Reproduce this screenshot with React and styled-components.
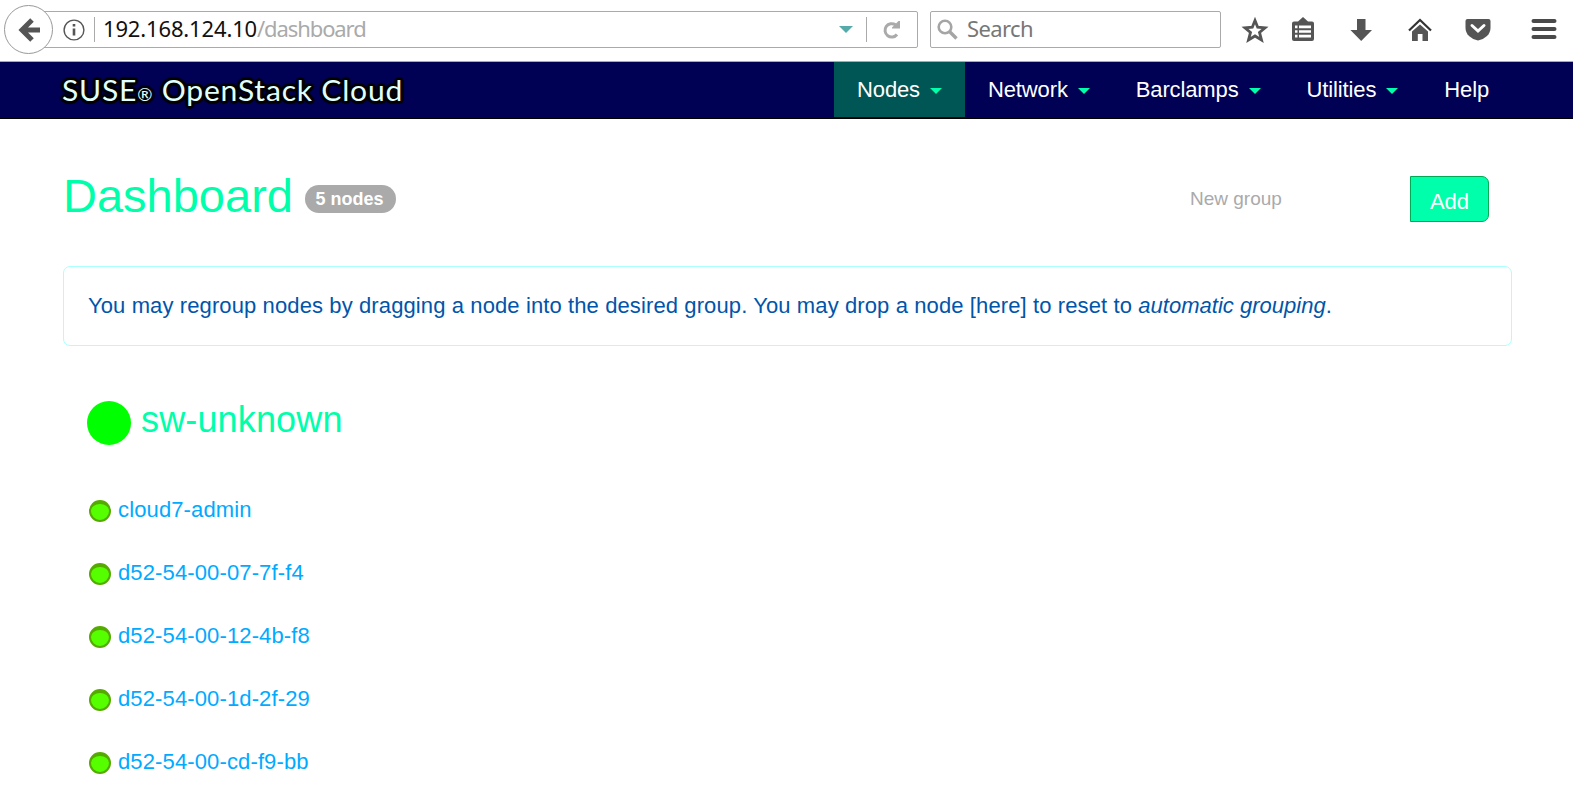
import React from 'react';
import styled, { createGlobalStyle } from 'styled-components';

const GlobalStyle = createGlobalStyle`
  *, *::before, *::after { box-sizing: border-box; }
  body {
    margin: 0;
    background: #fff;
    font-family: "Liberation Sans", Arial, sans-serif;
    font-size: 22px;
    overflow: hidden;
  }
`;

const Toolbar = styled.header`
  display: flex;
  align-items: center;
  height: 62px;
  padding: 0 0 2px 4px;
  border-bottom: 1px solid #aaaaa6;
  font-family: "Noto Sans", "Open Sans", sans-serif;
`;

const BackButton = styled.button`
  flex: none;
  z-index: 1;
  width: 49px;
  height: 49px;
  padding: 0;
  border: 1px solid #999;
  border-radius: 50%;
  background: #fff;
`;

const Field = styled.div`
  display: flex;
  align-items: center;
  flex: none;
  height: 37px;
  border: 1px solid #aaa;
  border-radius: 2px;
  white-space: pre;
`;

const AddressField = styled(Field)`
  width: 875px;
  margin-left: -10px;
  padding: 0 16px 0 19px;
`;

const SearchField = styled(Field)`
  width: 291px;
  margin-left: 12px;
  padding-left: 6px;
`;

const Separator = styled.span`
  width: 1px;
  height: 25px;
  margin: 0 ${(p) => p.$after}px 0 ${(p) => p.$before}px;
  background: #aaa;
`;

const Address = styled.span`
  flex: 1;
  margin-bottom: 3px;
  line-height: 30px;
  color: #111;
  letter-spacing: -0.15px;
`;

const AddressPath = styled.span`
  color: #aaa;
  letter-spacing: -1.1px;
`;

const SearchHint = styled.span`
  margin: 0 0 3px 9px;
  line-height: 30px;
  color: #777;
  letter-spacing: -0.6px;
`;

const Glyph = styled.svg`
  display: block;
  flex: none;
  overflow: visible;
`;

const ToolbarIcon = styled(Glyph)`
  margin-left: ${(p) => p.$gap}px;
`;

const Navbar = styled.nav`
  display: flex;
  justify-content: space-between;
  height: 57px;
  padding: 0 61px 0 62px;
  border-bottom: 1px solid #000;
  background: #000055;
  color: #fff;
`;

const Brand = styled.div`
  padding-top: 10px;
  font-family: Lato, sans-serif;
  font-size: 28px;
  line-height: 36px;
  letter-spacing: 0.75px;
  white-space: nowrap;
  color: #e0ffff;
  transform: scaleX(1.073);
  transform-origin: left;
  text-shadow: -2px -2px 1px #000, 2px -2px 1px #000, -2px 2px 1px #000,
    2px 2px 1px #000, 0 3px 1px #000, 0 -3px 1px #000, 3px 0 1px #000, -3px 0 1px #000;
`;

const Registered = styled.span`
  font-size: 17px;
`;

const Menu = styled.div`
  display: flex;
`;

const MenuItem = styled.a`
  display: flex;
  align-items: center;
  height: 55px;
  padding: 0 23px;
  letter-spacing: -0.13px;
  background: ${(p) => (p.$active ? '#005555' : 'transparent')};
`;

const Caret = styled.span`
  width: 12px;
  margin: 3px 0 0 10px;
  border: 6px solid transparent;
  border-top-color: #00ffaa;
  border-bottom: 0;
`;

const Page = styled.main`
  padding: 57px 61px 0 63px;
`;

const PageHeader = styled.div`
  display: flex;
  align-items: center;
  height: 46px;
  padding-right: 23px;
`;

const Title = styled.h1`
  align-self: flex-start;
  margin: 0;
  font-size: 47px;
  font-weight: 400;
  line-height: 40px;
  color: #00ffaa;
`;

const Badge = styled.span`
  display: flex;
  align-items: center;
  justify-content: center;
  width: 91px;
  height: 28px;
  margin-left: 12px;
  padding-right: 2px;
  border-radius: 14px;
  background: #aaa;
  color: #fff;
  font-size: 18px;
  font-weight: 700;
`;

const GroupInput = styled.div`
  width: 220px;
  margin-left: auto;
  font-size: 19px;
  color: #aaa;
`;

const AddButton = styled.button`
  width: 79px;
  height: 46px;
  padding: 6px 0 0;
  border: 1px solid #00aa55;
  border-radius: 0 7px 7px 0;
  background: #00ffaa;
  color: #fff;
  font: inherit;
`;

const Notice = styled.p`
  height: 80px;
  margin: 44px 0 0;
  padding: 0 24px;
  border: 1px solid #aaffff;
  border-radius: 7px;
  line-height: 78px;
  letter-spacing: 0.11px;
  white-space: nowrap;
  color: #0055aa;

  em {
    letter-spacing: 0.02px;
  }
`;

const Group = styled.section`
  padding: 55px 0 0 24px;
`;

const GroupHeader = styled.div`
  display: flex;
  align-items: center;
  height: 44px;
`;

const GroupStatus = styled.span`
  width: 44px;
  height: 44px;
  border-radius: 50%;
  background: #00ff00;
`;

const GroupName = styled.h2`
  margin: 0 0 6px 10px;
  font-size: 36px;
  font-weight: 400;
  line-height: 40px;
  letter-spacing: 0.15px;
  color: #00ffaa;
`;

const NodeList = styled.ul`
  margin: 34px 0 0;
  padding: 0;
  list-style: none;
`;

const NodeRow = styled.li`
  display: flex;
  align-items: center;
  height: 63px;
  padding-left: 2px;
`;

const NodeStatus = styled.span`
  width: 22px;
  height: 22px;
  border: 2px solid #55aa00;
  border-top-width: 4px;
  border-radius: 50%;
  background: #55ff00;
`;

const NodeLink = styled.a`
  margin: 0 0 2px 7px;
  letter-spacing: 0.13px;
  color: #00aaff;
`;

const MENU = [
  { label: 'Nodes', caret: true, active: true },
  { label: 'Network', caret: true },
  { label: 'Barclamps', caret: true },
  { label: 'Utilities', caret: true },
  { label: 'Help' },
];

const NODES = [
  'cloud7-admin',
  'd52-54-00-07-7f-f4',
  'd52-54-00-12-4b-f8',
  'd52-54-00-1d-2f-29',
  'd52-54-00-cd-f9-bb',
];

function BrowserBar() {
  return (
    <Toolbar>
      <BackButton aria-label="Back">
        <Glyph width="47" height="47" viewBox="0 0 47 47" fill="none" stroke="#555" strokeWidth="5">
          <path d="M35 24H18M27 14L17 24L27 34" />
        </Glyph>
      </BackButton>
      <AddressField>
        <Glyph width="22" height="22" viewBox="0 0 22 22" fill="none" stroke="#555">
          <circle cx="11" cy="11" r="9.9" strokeWidth="1.4" />
          <path d="M11 9.5V16.5M11 5V7.5" strokeWidth="2.6" />
        </Glyph>
        <Separator $before={9} $after={8} />
        <Address>
          192.168.124.10<AddressPath>/dashboard</AddressPath>
        </Address>
        <Glyph width="14" height="7" viewBox="0 0 14 7">
          <path d="M0 0H14L7 7Z" fill="#55aaaa" />
        </Glyph>
        <Separator $before={13} $after={16} />
        <Glyph width="18" height="18" viewBox="0 0 18 18">
          <path d="M14 13.5A6.7 6.7 0 1 1 12.5 3.8" fill="none" stroke="#aaa" strokeWidth="3" />
          <path d="M17 0V7.500H9V6.500L15.500 0Z" fill="#aaa" />
        </Glyph>
      </AddressField>
      <SearchField>
        <Glyph width="21" height="21" viewBox="0 0 21 21" fill="none" stroke="#a5a5a5">
          <circle cx="8" cy="8" r="6.3" strokeWidth="2.6" />
          <path d="M12.5 12.5L19.5 19.5" strokeWidth="3.4" />
        </Glyph>
        <SearchHint>Search</SearchHint>
      </SearchField>
      <ToolbarIcon $gap={21} width="26" height="26" viewBox="0 0 26 26">
        <path d="M13 3.500L15.700 10.200L23 10.800L17.500 15.400L19.500 23L13 19L6.500 23L8.500 15.400L3 10.800L10.300 10.200Z" fill="none" stroke="#555" strokeWidth="2.8" />
      </ToolbarIcon>
      <ToolbarIcon $gap={22} width="26" height="26" viewBox="0 0 26 26">
        <path d="M4 4.5H8L13 0L18 4.5H22Q24 4.5 24 6.5V22Q24 24 22 24H4Q2 24 2 22V6.5Q2 4.5 4 4.5Z" fill="#555" />
        <path d="M5 9.8H7.5M9 9.8H21M5 14.5H7.5M9 14.5H21M5 19.200H7.500M9 19.200H21" stroke="#fff" strokeWidth="2.7" />
      </ToolbarIcon>
      <ToolbarIcon $gap={32} width="26" height="26" viewBox="0 0 26 26">
        <path d="M9 2H17.5V13H24L13.2 24L2.4 13H9Z" fill="#555" />
      </ToolbarIcon>
      <ToolbarIcon $gap={33} width="26" height="26" viewBox="0 0 26 26">
        <path d="M2 13.500L13 3L24 13.500" fill="none" stroke="#333" strokeWidth="2.2" />
        <path d="M5 14.500L13 7.500L21 14.500V24H15.500V17H10.800V24H5Z" fill="#555" />
      </ToolbarIcon>
      <ToolbarIcon $gap={32} width="26" height="26" viewBox="0 0 26 26">
        <path d="M2.500 2H23.500Q25.500 2 25.500 4V11Q25.500 15.500 22 19T13 23.500Q7.500 22.500 4 19T0.500 11V4Q0.500 2 2.500 2Z" fill="#555" />
        <path d="M7 8.500L13 14L19 8.500" fill="none" stroke="#fff" strokeWidth="3" strokeLinecap="round" />
      </ToolbarIcon>
      <ToolbarIcon $gap={40} width="26" height="26" viewBox="0 0 26 26">
        <path d="M2.500 4H23.500M2.500 12H23.500M2.500 20H23.500" stroke="#4a4a4a" strokeWidth="4" strokeLinecap="round" />
      </ToolbarIcon>
    </Toolbar>
  );
}

export default function App() {
  return (
    <>
      <GlobalStyle />
      <BrowserBar />
      <Navbar>
        <Brand>
          SUSE<Registered>®</Registered> OpenStack Cloud
        </Brand>
        <Menu>
          {MENU.map((item) => (
            <MenuItem key={item.label} $active={item.active}>
              {item.label}
              {item.caret && <Caret />}
            </MenuItem>
          ))}
        </Menu>
      </Navbar>
      <Page>
        <PageHeader>
          <Title>Dashboard</Title>
          <Badge>5 nodes</Badge>
          <GroupInput>New group</GroupInput>
          <AddButton>Add</AddButton>
        </PageHeader>
        <Notice>
          You may regroup nodes by dragging a node into the desired group. You may drop a node [here] to reset to{' '}
          <em>automatic grouping</em>.
        </Notice>
        <Group>
          <GroupHeader>
            <GroupStatus />
            <GroupName>sw-unknown</GroupName>
          </GroupHeader>
          <NodeList>
            {NODES.map((name) => (
              <NodeRow key={name}>
                <NodeStatus />
                <NodeLink>{name}</NodeLink>
              </NodeRow>
            ))}
          </NodeList>
        </Group>
      </Page>
    </>
  );
}
